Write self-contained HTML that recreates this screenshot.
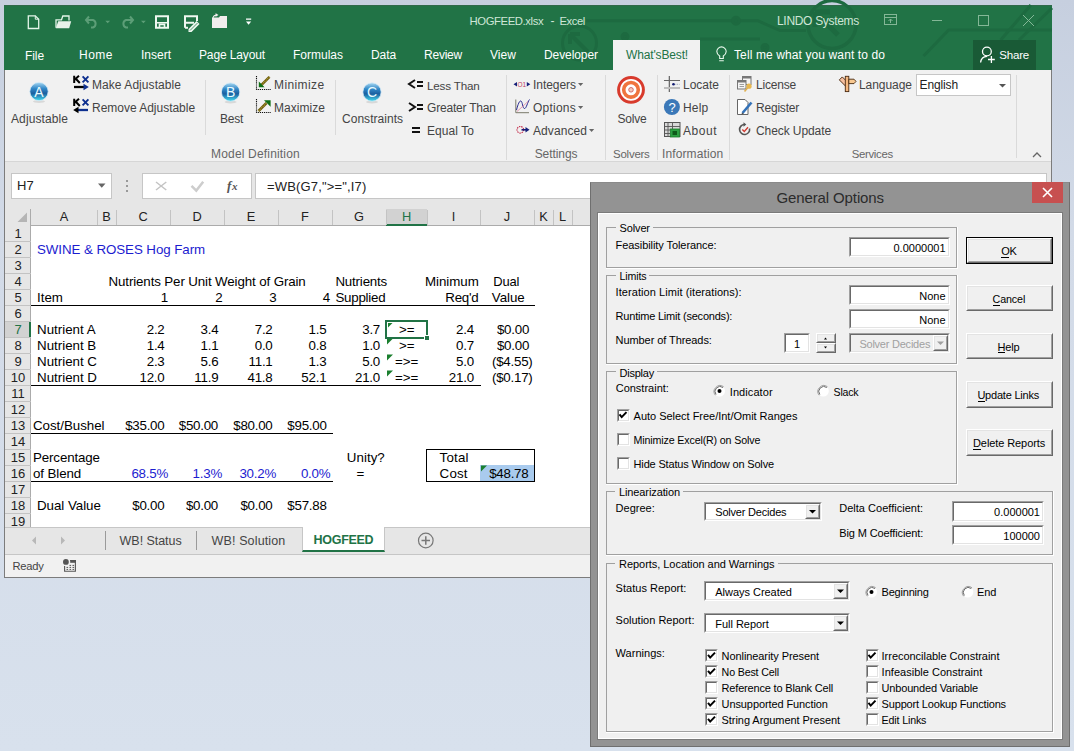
<!DOCTYPE html>
<html><head><meta charset="utf-8">
<style>
*{box-sizing:border-box;margin:0;padding:0}
html,body{width:1074px;height:751px;overflow:hidden}
body{position:relative;background:linear-gradient(#c6cfdf,#d2dae7 30%,#d8e1ed);font-family:"Liberation Sans",sans-serif;color:#000}
.a{position:absolute;white-space:nowrap}
.r{position:absolute}
svg{position:absolute;overflow:visible}
</style></head><body>
<div class="r" style="left:4px;top:5px;width:1048px;height:573px;background:#e6e6e6;border:1px solid #7c7c7c;border-top:0"></div>
<div class="r" style="left:4px;top:5px;width:1048px;height:65px;background:#217346;border-top:1px solid #30694a"></div>
<svg style="left:0;top:0" width="1074" height="80"><g stroke="#1d6a40" stroke-width="3" fill="none">
<path d="M586 20.8 H758 L780 30.6 H806"/>
<circle cx="736" cy="20.8" r="3.5" fill="#1d6a40"/>
<path d="M700 39 H760"/><circle cx="765" cy="47.5" r="3" fill="#1d6a40"/>
<circle cx="832" cy="24.6" r="24" stroke-width="3.5"/>
<path d="M815 12 L838 35 M815 12 H830 M815 12 V27" stroke-width="5"/>
<circle cx="579.5" cy="43" r="17" stroke-width="3"/>
<path d="M570 34 L588 52 M570 34 H580 M570 34 V44" stroke-width="4"/>
<circle cx="625" cy="36.6" r="3" fill="#1d6a40"/>
<path d="M923.6 56 L948.7 30 H1052"/>
<path d="M1000.7 40 L1030.8 5 M1019 40 L1052 8"/>
</g></svg>
<svg style="left:0;top:0" width="300" height="40">
<g fill="none" stroke="#e4f5e9" stroke-width="1.3">
<path d="M28.3 15.8 H35.3 L38.7 19.2 V28.5 H28.3 Z"/><path d="M35.3 15.8 V19.2 H38.7" stroke-width="1"/>
<path d="M56 27.8 V19.8 H61.5 L62.8 16 H69 V20.5"/>
</g>
<path d="M55.8 28.2 L58.2 21.2 H71.2 L69.2 28.2 Z" fill="#e8f2ea"/>
<g fill="none" stroke="#5c9e77" stroke-width="2">
<path d="M89 16.5 L86 20 L89 23.5 M86.5 20 H93 a4 4 0 0 1 0 7.5 H91"/>
<path d="M130 16.5 L133 20 L130 23.5 M132.5 20 H126 a4 4 0 0 0 0 7.5 H128"/>
</g>
<g fill="#5c9e77"><path d="M105.3 20.8 h4.8 l-2.4 2.4 z M141 20.8 h4.8 l-2.4 2.4 z"/></g>
<g fill="none" stroke="#eef8f0" stroke-width="2">
<path d="M156 16.3 H168 V27.7 H156 Z"/><path d="M156 22.8 H168 M159.5 28 V24.5 H164.5 V28" stroke-width="1.6"/>
<path d="M185 27.7 V16.3 H197 V21 M185 22.8 H194 M185 27.7 H188"/>
</g>
<path d="M188.5 29 L196.5 21 L199.5 24 L191.5 32 H188.5 Z" fill="#eef8f0"/><path d="M190 30.5 L197.5 23" stroke="#217346" stroke-width="0.8"/>
<g fill="#f1eded"><path d="M212 28 V17.5 H219 L220 16 H227 V28 Z"/></g>
<path d="M213 18 Q213.5 15 217 15 M215.5 13.8 L217.5 15 L215.5 16.4" stroke="#f1eded" stroke-width="1.1" fill="none"/>
<g fill="#fff"><path d="M246 18.6 H251.2 V19.8 H246 Z M246 21.5 H251.2 L248.6 24.8 Z"/></g>
</svg>
<svg style="left:0;top:0" width="1074" height="40"><g fill="none" stroke="#84b797" stroke-width="1">
<rect x="884.5" y="14.5" width="12" height="10"/><path d="M884.5 17.5 H896.5 M890.5 23 V19 M888.5 21 L890.5 19 L892.5 21"/>
<path d="M932 20.5 H942"/>
<rect x="978.5" y="15.5" width="10" height="10"/>
<path d="M1023 15 L1034 26 M1034 15 L1023 26"/>
</g></svg>
<div class="r" style="left:613px;top:40px;width:87px;height:31px;background:#f1f1f1"></div>
<svg style="left:0;top:0" width="1074" height="80"><g fill="none" stroke="#fff" stroke-width="1.2">
<path d="M719.7 58.5 V56 C717.5 54.6 716.8 53 716.8 51.6 A4.7 4.7 0 0 1 726.2 51.6 C726.2 53 725.5 54.6 723.3 56 V58.5 Z M719.2 60.8 H723.8" stroke="#e8f8ec" stroke-width="1.1"/>
</g></svg>
<div class="r" style="left:973px;top:40px;width:63px;height:30px;background:#195a36"></div>
<svg style="left:0;top:0" width="1074" height="80"><g fill="none" stroke="#fff" stroke-width="1.4">
<circle cx="986.9" cy="51.5" r="4.4" stroke-width="1.3"/><path d="M980.6 62.5 C981 59 983.5 56.6 987 56.4 M991.4 56 V63 M988 59.5 H994.8" stroke-width="1.3"/>
</g></svg>
<div class="r" style="left:5px;top:70px;width:1046px;height:92px;background:#f1f1f1;border-bottom:1px solid #d6d6d6"></div>
<div class="r" style="left:205px;top:80px;width:1px;height:55px;background:#dadada"></div>
<div class="r" style="left:335px;top:80px;width:1px;height:55px;background:#dadada"></div>
<div class="r" style="left:506px;top:75px;width:1px;height:85px;background:#dadada"></div>
<div class="r" style="left:605px;top:75px;width:1px;height:85px;background:#dadada"></div>
<div class="r" style="left:657px;top:75px;width:1px;height:85px;background:#dadada"></div>
<div class="r" style="left:729px;top:75px;width:1px;height:85px;background:#dadada"></div>
<div class="r" style="left:1016px;top:75px;width:1px;height:83px;background:#dadada"></div>
<svg style="left:0;top:0" width="1074" height="200"><defs><linearGradient id="sgA" x1="0" y1="0" x2="0" y2="1"><stop offset="0" stop-color="#a8d8f2"/><stop offset="0.35" stop-color="#2f86c6"/><stop offset="0.6" stop-color="#1b5f9f"/><stop offset="1" stop-color="#45dcef"/></linearGradient></defs>
<ellipse cx="39" cy="101.5" rx="6" ry="1.5" fill="#000" opacity="0.10"/>
<circle cx="39" cy="91.5" r="9.2" fill="url(#sgA)" stroke="#d9ecf8" stroke-width="0.8"/>
<text x="39" y="96.5" font-family="Liberation Sans" font-size="14" fill="#e8fbff" text-anchor="middle">A</text></svg>
<svg style="left:0;top:0" width="1074" height="200"><defs><linearGradient id="sgB" x1="0" y1="0" x2="0" y2="1"><stop offset="0" stop-color="#a8d8f2"/><stop offset="0.35" stop-color="#2f86c6"/><stop offset="0.6" stop-color="#1b5f9f"/><stop offset="1" stop-color="#45dcef"/></linearGradient></defs>
<ellipse cx="230.6" cy="102" rx="6" ry="1.5" fill="#000" opacity="0.10"/>
<circle cx="230.6" cy="92" r="9.2" fill="url(#sgB)" stroke="#d9ecf8" stroke-width="0.8"/>
<text x="230.6" y="97" font-family="Liberation Sans" font-size="14" fill="#e8fbff" text-anchor="middle">B</text></svg>
<svg style="left:0;top:0" width="1074" height="200"><defs><linearGradient id="sgC" x1="0" y1="0" x2="0" y2="1"><stop offset="0" stop-color="#a8d8f2"/><stop offset="0.35" stop-color="#2f86c6"/><stop offset="0.6" stop-color="#1b5f9f"/><stop offset="1" stop-color="#45dcef"/></linearGradient></defs>
<ellipse cx="372" cy="102" rx="6" ry="1.5" fill="#000" opacity="0.10"/>
<circle cx="372" cy="92" r="9.2" fill="url(#sgC)" stroke="#d9ecf8" stroke-width="0.8"/>
<text x="372" y="97" font-family="Liberation Sans" font-size="14" fill="#e8fbff" text-anchor="middle">C</text></svg>
<svg style="left:0;top:0" width="1074" height="200">
<g id="kx"><path d="M74.2 75.8 V83 M74.2 80 L79 75.8 M75.8 78.8 L79.8 83" stroke="#000" stroke-width="2" fill="none"/>
<path d="M82.6 76.3 L88.4 82.4 M88.4 76.3 L82.6 82.4" stroke="#0d2f8f" stroke-width="1.9" fill="none"/></g>
<path d="M74 87 H85" stroke="#000" stroke-width="2.3"/><path d="M83.5 83.8 L88.8 87 L83.5 90.2 Z" fill="#0d2f8f"/>
<use href="#kx" y="23"/>
<path d="M77 110 H88" stroke="#0d2f8f" stroke-width="2.3"/><path d="M78.5 106.8 L73.2 110 L78.5 113.2 Z" fill="#000"/>
</svg>
<svg style="left:0;top:0" width="1074" height="200"><g>
<path d="M256.5 76 V89.5 H271" stroke="#111" stroke-width="1.1" stroke-dasharray="1.2 0.9" fill="none"/>
<path d="M269.5 76.8 L261 85.3" stroke="#6b5d10" stroke-width="2.6"/><path d="M269.5 76.8 L261 85.3" stroke="#b7a030" stroke-width="1.2" stroke-dasharray="1 1"/>
<path d="M258.8 81.5 V87.3 H264.6 Z" fill="#0f6e14"/>
<path d="M256.5 99 V112.5 H271" stroke="#111" stroke-width="1.1" stroke-dasharray="1.2 0.9" fill="none"/>
<path d="M258.5 111 L266.5 103" stroke="#6b5d10" stroke-width="2.6"/><path d="M258.5 111 L266.5 103" stroke="#b7a030" stroke-width="1.2" stroke-dasharray="1 1"/>
<path d="M264 100.2 H270.6 V106.8 Z" fill="#0f6e14"/>
</g></svg>
<svg style="left:0;top:0" width="1074" height="200"><g stroke="#111" stroke-width="2" fill="none">
<path d="M415 80 L409 84 L415 88"/><path d="M417 82 H423 M417 86 H423"/>
<path d="M409 103 L415 107 L409 111"/><path d="M417 105 H423 M417 109 H423"/>
<path d="M412 128 H420 M412 132 H420"/>
</g></svg>
<svg style="left:0;top:0" width="1074" height="200">
<path d="M513.5 84.3 L517 82 V86.6 Z M530.3 84.3 L526.8 82 V86.6 Z" fill="#16207a"/>
<text x="517.5" y="86.8" font-family="Liberation Sans" font-size="6.5" fill="#c04060">O1</text>
<path d="M515.8 99.5 V112.7 H529" stroke="#7a7a6a" stroke-width="1" fill="none"/>
<path d="M516.5 110 C518 104 519.5 100.5 521 101 C522.5 101.5 522.5 108.5 524.5 108.5 C526.5 108.5 527.5 102 529.5 99.5" stroke="#2a2a90" stroke-width="1" fill="none"/>
<path d="M517 111.5 L528 101.5" stroke="#e080a0" stroke-width="0.8"/>
<circle cx="520.3" cy="129.8" r="3.3" stroke="#c02040" stroke-width="1.1" stroke-dasharray="1.4 0.9" fill="none"/>
<path d="M521.5 129.8 H526" stroke="#16207a" stroke-width="1.6"/><path d="M525.5 127 L529.5 129.8 L525.5 132.6 Z" fill="#16207a"/>
<path d="M578 83 h5.2 l-2.6 2.9 z M578 106 h5.2 l-2.6 2.9 z M589 129 h5.2 l-2.6 2.9 z" fill="#666"/>
</svg>
<svg style="left:0;top:0" width="1074" height="200">
<circle cx="631" cy="89.8" r="12.4" fill="#fff" stroke="#d83a2c" stroke-width="3"/>
<circle cx="631" cy="89.8" r="7.3" fill="#fff" stroke="#f0743e" stroke-width="3.6"/>
<circle cx="631" cy="89.8" r="2.3" fill="#f6c8b8" stroke="#c85050" stroke-width="0.8"/>
</svg>
<svg style="left:0;top:0" width="1074" height="200">
<path d="M669.3 76 V92" stroke="#555" stroke-width="1.1"/>
<path d="M664 80.5 H680" stroke="#666" stroke-width="1"/><path d="M664 88 H680" stroke="#bdbdbd" stroke-width="2"/>
<circle cx="673.5" cy="84.3" r="1.3" fill="#101a70"/><path d="M675.5 84.3 H679.5" stroke="#7080a0" stroke-width="0.8" stroke-dasharray="0.8 0.9"/>
<circle cx="671.9" cy="107" r="8" fill="#3b78b8"/>
<text x="672" y="111.6" font-family="Liberation Sans" font-size="13" fill="#fff" text-anchor="middle">?</text>
<rect x="664.5" y="122.5" width="15.5" height="14" fill="#d8d8d8" stroke="#555" stroke-width="1"/>
<path d="M664.5 126.5 H680 M664.5 130 H670 M664.5 133.5 H670 M668 122.5 V136.5 M672.5 122.5 V129" stroke="#555" stroke-width="0.9"/>
<rect x="670.3" y="129" width="9.2" height="8" fill="#2aa040" stroke="#1a7a28" stroke-width="0.8"/><rect x="672.5" y="131" width="4.5" height="4" fill="#0c5a18"/>
</svg>
<svg style="left:0;top:0" width="1074" height="200">
<rect x="742.5" y="76.5" width="8.5" height="8" fill="#f4f4f4" stroke="#777" stroke-width="1"/><rect x="742.5" y="76.5" width="8.5" height="2" fill="#777"/>
<rect x="737.5" y="80.5" width="8.5" height="8.5" fill="#f4f4f4" stroke="#777" stroke-width="1"/><rect x="737.5" y="80.5" width="8.5" height="2" fill="#777"/>
<path d="M739.5 84.5 H744 M739.5 86.5 H744" stroke="#888" stroke-width="0.8"/>
<circle cx="749" cy="86.2" r="2.6" fill="#e8b850"/><path d="M747.5 88 L744.5 91.5" stroke="#e0b050" stroke-width="1.6"/>
<path d="M737.5 99.5 H745 L748 102.5 V114.5 H737.5 Z" fill="#fff" stroke="#666" stroke-width="1"/>
<path d="M742.5 113 L751.5 102.5" stroke="#3472b8" stroke-width="2.6"/><path d="M741 115 L742.3 112.5 L743.8 113.8 Z" fill="#555"/>
<path d="M749.5 128.5 A5 5 0 1 1 744.5 124.5" stroke="#555" stroke-width="1.6" fill="none"/><path d="M743.5 122.3 L746.3 124.5 L743.5 126.8 Z" fill="#555"/>
<path d="M742.3 129.5 L744.3 131.5 L748 127.3" stroke="#d03a30" stroke-width="1.3" fill="none"/>
<rect x="839.5" y="79.5" width="9" height="4.2" transform="rotate(45 844 81.6)" fill="#f6c0a0" stroke="#4a2a10" stroke-width="0.9"/>
<rect x="845.3" y="76.3" width="3.5" height="15.3" fill="#f4b880" stroke="#4a2a10" stroke-width="0.9"/>
<path d="M848.8 79.2 H854 L856 81.4 L854 83.6 H848.8 Z" fill="#f8c890" stroke="#4a2a10" stroke-width="0.9"/>
</svg>
<div class="r" style="left:916px;top:74px;width:95px;height:22px;background:#fff;border:1px solid #c6c6c6"></div>
<svg style="left:0;top:0" width="1074" height="200"><path d="M999 84 h7 l-3.5 3.5 z" fill="#555"/><path d="M1033 157 L1037 153 L1041 157" stroke="#666" stroke-width="1.3" fill="none"/></svg>
<div class="r" style="left:11px;top:173px;width:101px;height:26px;background:#fff;border:1px solid #c6c6c6"></div>
<svg style="left:0;top:0" width="300" height="230"><path d="M98 183.5 h7.5 l-3.75 4.2 z" fill="#666"/><g fill="#999"><rect x="126" y="180" width="2" height="2"/><rect x="126" y="185" width="2" height="2"/><rect x="126" y="190" width="2" height="2"/></g></svg>
<div class="r" style="left:142px;top:173px;width:110px;height:26px;background:#fff;border:1px solid #c6c6c6"></div>
<svg style="left:0;top:0" width="300" height="230"><path d="M156 182 L166.3 190 M166.3 182 L156 190" stroke="#c4c4c4" stroke-width="1.5" fill="none"/><path d="M191.5 185.8 L196.3 190.6 L203.2 181.8" stroke="#cdcdcd" stroke-width="2.5" fill="none"/><text x="227" y="190" font-family="Liberation Serif" font-style="italic" font-weight="700" font-size="13" fill="#555">f</text><text x="232" y="190" font-family="Liberation Serif" font-style="italic" font-weight="700" font-size="11" fill="#555">x</text></svg>
<div class="r" style="left:255px;top:173px;width:792px;height:26px;background:#fff;border:1px solid #c6c6c6"></div>
<div class="r" style="left:5px;top:209px;width:600px;height:318px;background:#fff"></div>
<div class="r" style="left:5px;top:209px;width:600px;height:17px;background:#e6e6e6;border-bottom:1px solid #ababab"></div>
<div class="r" style="left:5px;top:209px;width:26px;height:318px;background:#e6e6e6;border-right:1px solid #ababab"></div>
<div class="r" style="left:386px;top:209px;width:41px;height:17px;background:#d2d2d2;border-bottom:2px solid #217346"></div>
<div class="r" style="left:5px;top:322px;width:26px;height:16px;background:#d2d2d2;border-right:2px solid #217346"></div>
<div class="r" style="left:97px;top:210px;width:1px;height:15px;background:#c3c3c3"></div>
<div class="r" style="left:116px;top:210px;width:1px;height:15px;background:#c3c3c3"></div>
<div class="r" style="left:170px;top:210px;width:1px;height:15px;background:#c3c3c3"></div>
<div class="r" style="left:224px;top:210px;width:1px;height:15px;background:#c3c3c3"></div>
<div class="r" style="left:278px;top:210px;width:1px;height:15px;background:#c3c3c3"></div>
<div class="r" style="left:332px;top:210px;width:1px;height:15px;background:#c3c3c3"></div>
<div class="r" style="left:386px;top:210px;width:1px;height:15px;background:#c3c3c3"></div>
<div class="r" style="left:427px;top:210px;width:1px;height:15px;background:#c3c3c3"></div>
<div class="r" style="left:480px;top:210px;width:1px;height:15px;background:#c3c3c3"></div>
<div class="r" style="left:534px;top:210px;width:1px;height:15px;background:#c3c3c3"></div>
<div class="r" style="left:553px;top:210px;width:1px;height:15px;background:#c3c3c3"></div>
<div class="r" style="left:572px;top:210px;width:1px;height:15px;background:#c3c3c3"></div>
<svg style="left:0;top:0" width="40" height="240"><path d="M27 212.5 V222 H17.5 Z" fill="#b5b5b5"/></svg>
<div class="r" style="left:5px;top:241px;width:26px;height:1px;background:#c3c3c3"></div>
<div class="r" style="left:5px;top:257px;width:26px;height:1px;background:#c3c3c3"></div>
<div class="r" style="left:5px;top:273px;width:26px;height:1px;background:#c3c3c3"></div>
<div class="r" style="left:5px;top:289px;width:26px;height:1px;background:#c3c3c3"></div>
<div class="r" style="left:5px;top:305px;width:26px;height:1px;background:#c3c3c3"></div>
<div class="r" style="left:5px;top:321px;width:26px;height:1px;background:#c3c3c3"></div>
<div class="r" style="left:5px;top:337px;width:26px;height:1px;background:#c3c3c3"></div>
<div class="r" style="left:5px;top:353px;width:26px;height:1px;background:#c3c3c3"></div>
<div class="r" style="left:5px;top:369px;width:26px;height:1px;background:#c3c3c3"></div>
<div class="r" style="left:5px;top:385px;width:26px;height:1px;background:#c3c3c3"></div>
<div class="r" style="left:5px;top:401px;width:26px;height:1px;background:#c3c3c3"></div>
<div class="r" style="left:5px;top:417px;width:26px;height:1px;background:#c3c3c3"></div>
<div class="r" style="left:5px;top:433px;width:26px;height:1px;background:#c3c3c3"></div>
<div class="r" style="left:5px;top:449px;width:26px;height:1px;background:#c3c3c3"></div>
<div class="r" style="left:5px;top:465px;width:26px;height:1px;background:#c3c3c3"></div>
<div class="r" style="left:5px;top:481px;width:26px;height:1px;background:#c3c3c3"></div>
<div class="r" style="left:5px;top:497px;width:26px;height:1px;background:#c3c3c3"></div>
<div class="r" style="left:5px;top:513px;width:26px;height:1px;background:#c3c3c3"></div>
<div class="r" style="left:5px;top:529px;width:26px;height:1px;background:#c3c3c3"></div>
<div class="r" style="left:31px;top:305px;width:504px;height:1px;background:#000"></div>
<div class="r" style="left:31px;top:385px;width:450px;height:1px;background:#000"></div>
<div class="r" style="left:31px;top:433px;width:302px;height:1px;background:#000"></div>
<div class="r" style="left:31px;top:481px;width:302px;height:1px;background:#000"></div>
<div class="r" style="left:480px;top:465px;width:55px;height:17px;background:#a9cbee"></div>
<div class="r" style="left:426px;top:449px;width:109px;height:33px;border:1px solid #000"></div>
<svg style="left:0;top:0" width="600" height="500"><path d="M388 323 h4.5 L388 327.5 Z" fill="#1a7f2e"/><path d="M387 338.5 h6 L387 344.5 Z" fill="#1a7f2e"/><path d="M387 354.5 h6 L387 360.5 Z" fill="#1a7f2e"/><path d="M387 370.5 h6 L387 376.5 Z" fill="#1a7f2e"/><path d="M481 465.5 h6 L481 471.5 Z" fill="#1a7f2e"/></svg>
<div class="r" style="left:385px;top:320px;width:43px;height:19px;border:2px solid #217346"></div>
<div class="r" style="left:423.5px;top:334.5px;width:6px;height:6px;background:#217346;border:1px solid #fff"></div>
<div class="r" style="left:5px;top:527px;width:600px;height:28px;background:#e6e6e6;border-top:1px solid #c6c6c6;border-bottom:1px solid #c6c6c6"></div>
<svg style="left:0;top:0" width="600" height="580"><path d="M36 536.5 V544.5 L32 540.5 Z M61 536.5 V544.5 L65 540.5 Z" fill="#b8b8b8"/><path d="M105.5 531 V550 M196.5 531 V550" stroke="#9a9a9a" stroke-width="1"/><circle cx="425.8" cy="540.5" r="7.3" fill="none" stroke="#777" stroke-width="1.2"/><path d="M421.5 540.5 H430 M425.8 536.3 V544.7" stroke="#777" stroke-width="1.5"/></svg>
<div class="r" style="left:302px;top:527px;width:83px;height:25px;background:#fff;border-bottom:2px solid #217346;border-left:1px solid #c6c6c6;border-right:1px solid #c6c6c6"></div>
<div class="r" style="left:5px;top:555px;width:1046px;height:22px;background:#f1f1f1"></div>
<svg style="left:0;top:0" width="600" height="580"><path d="M64.6 566 V571.3 H75.4 V560.5 H70.2" stroke="#555" stroke-width="1.1" fill="none"/><rect x="70.2" y="560" width="5.7" height="2.8" fill="#555"/><circle cx="65.9" cy="561.9" r="2.9" fill="#555"/><g fill="#555"><rect x="69.5" y="564.9" width="1.6" height="1"/><rect x="72.5" y="564.9" width="1.6" height="1"/><rect x="66.5" y="566.9" width="1.6" height="1"/><rect x="69.5" y="566.9" width="1.6" height="1"/><rect x="72.5" y="566.9" width="1.6" height="1"/><rect x="66.5" y="568.9" width="1.6" height="1"/><rect x="69.5" y="568.9" width="1.6" height="1"/><rect x="72.5" y="568.9" width="1.6" height="1"/></g></svg>
<div class="r" style="left:590px;top:182px;width:480px;height:565px;background:#939393;border:1px solid #6f6f6f;border-top-color:#8a8a8a"></div>
<div class="r" style="left:597px;top:212px;width:466px;height:528px;background:#f0f0f0;border:1px solid #7a7a7a;box-shadow:inset 1px 1px 0 #fff, inset -1px -1px 0 #fff"></div>
<div class="r" style="left:1032px;top:182px;width:31px;height:21px;background:#c75050"></div>
<svg style="left:0;top:0" width="1074" height="220"><path d="M1043 188 L1052 197 M1052 188 L1043 197" stroke="#fff" stroke-width="1.6"/></svg>
<div class="r" style="left:606px;top:227px;width:352px;height:42px;border:1px solid #fff;"></div>
<div class="r" style="left:606px;top:227px;width:351px;height:41px;border:1px solid #a0a0a0;"></div>
<div class="r" style="left:615.6px;top:224px;width:37.39999999999998px;height:7px;background:#f0f0f0"></div>
<div class="r" style="left:606px;top:275px;width:352px;height:90px;border:1px solid #fff;"></div>
<div class="r" style="left:606px;top:275px;width:351px;height:89px;border:1px solid #a0a0a0;"></div>
<div class="r" style="left:615.6px;top:272px;width:33.89999999999998px;height:7px;background:#f0f0f0"></div>
<div class="r" style="left:606px;top:371px;width:352px;height:114px;border:1px solid #fff;"></div>
<div class="r" style="left:606px;top:371px;width:351px;height:113px;border:1px solid #a0a0a0;"></div>
<div class="r" style="left:615.5px;top:368px;width:41.5px;height:7px;background:#f0f0f0"></div>
<div class="r" style="left:606px;top:491px;width:448px;height:65px;border:1px solid #fff;"></div>
<div class="r" style="left:606px;top:491px;width:447px;height:64px;border:1px solid #a0a0a0;"></div>
<div class="r" style="left:615px;top:488px;width:68px;height:7px;background:#f0f0f0"></div>
<div class="r" style="left:606px;top:563px;width:448px;height:170px;border:1px solid #fff;"></div>
<div class="r" style="left:606px;top:563px;width:447px;height:169px;border:1px solid #a0a0a0;"></div>
<div class="r" style="left:615px;top:560px;width:162.60000000000002px;height:7px;background:#f0f0f0"></div>
<div class="r" style="left:849px;top:237px;width:101px;height:20px;background:#fff;border:1px solid;border-color:#a0a0a0 #fff #fff #a0a0a0"></div>
<div class="r" style="left:850px;top:238px;width:99px;height:18px;border:1px solid;border-color:#696969 #e3e3e3 #e3e3e3 #696969"></div>
<div class="r" style="left:849px;top:285px;width:101px;height:20px;background:#fff;border:1px solid;border-color:#a0a0a0 #fff #fff #a0a0a0"></div>
<div class="r" style="left:850px;top:286px;width:99px;height:18px;border:1px solid;border-color:#696969 #e3e3e3 #e3e3e3 #696969"></div>
<div class="r" style="left:849px;top:309px;width:101px;height:20px;background:#fff;border:1px solid;border-color:#a0a0a0 #fff #fff #a0a0a0"></div>
<div class="r" style="left:850px;top:310px;width:99px;height:18px;border:1px solid;border-color:#696969 #e3e3e3 #e3e3e3 #696969"></div>
<div class="r" style="left:784px;top:333px;width:26px;height:20px;background:#fff;border:1px solid;border-color:#a0a0a0 #fff #fff #a0a0a0"></div>
<div class="r" style="left:785px;top:334px;width:24px;height:18px;border:1px solid;border-color:#696969 #e3e3e3 #e3e3e3 #696969"></div>
<div class="r" style="left:816px;top:333px;width:20px;height:10px;background:#f0f0f0;border:1px solid;border-color:#fff #696969 #696969 #fff"></div>
<div class="r" style="left:817px;top:334px;width:18px;height:8px;border:1px solid;border-color:#e3e3e3 #a0a0a0 #a0a0a0 #e3e3e3"></div>
<div class="r" style="left:816px;top:343px;width:20px;height:10px;background:#f0f0f0;border:1px solid;border-color:#fff #696969 #696969 #fff"></div>
<div class="r" style="left:817px;top:344px;width:18px;height:8px;border:1px solid;border-color:#e3e3e3 #a0a0a0 #a0a0a0 #e3e3e3"></div>
<svg style="left:0;top:0" width="1074" height="751"><path d="M824 339.5 h3 l-1.5 -2 z M824 346.5 h3 l-1.5 2 z" fill="#000"/></svg>
<div class="r" style="left:849px;top:333px;width:101px;height:20px;background:#f0f0f0;border:1px solid;border-color:#a0a0a0 #fff #fff #a0a0a0"></div>
<div class="r" style="left:850px;top:334px;width:99px;height:18px;border:1px solid;border-color:#696969 #e3e3e3 #e3e3e3 #696969"></div>
<div class="r" style="left:933px;top:335px;width:15px;height:16px;background:#f0f0f0;border:1px solid;border-color:#fff #696969 #696969 #fff"></div>
<div class="r" style="left:934px;top:336px;width:13px;height:14px;border:1px solid;border-color:#e3e3e3 #a0a0a0 #a0a0a0 #e3e3e3"></div>
<svg style="left:0;top:0" width="1074" height="751"><path d="M937.0 341.5 h7 l-3.5 3.5 z" fill="#a0a0a0"/></svg>
<svg style="left:0;top:0" width="1074" height="751"><circle cx="719.5" cy="391" r="5.5" fill="#fff"/><path d="M723.7 386.8 A6 6 0 0 0 715.3 395.2" stroke="#a0a0a0" stroke-width="1" fill="none"/><path d="M723.0 387.5 A5 5 0 0 0 716.0 394.5" stroke="#696969" stroke-width="1" fill="none"/><circle cx="719.5" cy="391" r="2" fill="#000"/></svg>
<svg style="left:0;top:0" width="1074" height="751"><circle cx="823.3" cy="391" r="5.5" fill="#fff"/><path d="M827.5 386.8 A6 6 0 0 0 819.0999999999999 395.2" stroke="#a0a0a0" stroke-width="1" fill="none"/><path d="M826.8 387.5 A5 5 0 0 0 819.8 394.5" stroke="#696969" stroke-width="1" fill="none"/></svg>
<div class="r" style="left:616.5px;top:408.5px;width:13.0px;height:13.0px;background:#fff;border:1px solid;border-color:#a0a0a0 #fff #fff #a0a0a0"></div>
<div class="r" style="left:617.5px;top:409.5px;width:11.0px;height:11.0px;border:1px solid;border-color:#696969 #e3e3e3 #e3e3e3 #696969"></div>
<svg style="left:0;top:0" width="1074" height="751"><path d="M619.5 414.3 L621.7 417.1 L626.5 412.1" stroke="#000" stroke-width="2" fill="none"/></svg>
<div class="r" style="left:616.5px;top:432.5px;width:13.0px;height:13.0px;background:#fff;border:1px solid;border-color:#a0a0a0 #fff #fff #a0a0a0"></div>
<div class="r" style="left:617.5px;top:433.5px;width:11.0px;height:11.0px;border:1px solid;border-color:#696969 #e3e3e3 #e3e3e3 #696969"></div>
<div class="r" style="left:616.5px;top:456.5px;width:13.0px;height:13.0px;background:#fff;border:1px solid;border-color:#a0a0a0 #fff #fff #a0a0a0"></div>
<div class="r" style="left:617.5px;top:457.5px;width:11.0px;height:11.0px;border:1px solid;border-color:#696969 #e3e3e3 #e3e3e3 #696969"></div>
<div class="r" style="left:704px;top:502px;width:118px;height:19px;background:#fff;border:1px solid;border-color:#a0a0a0 #fff #fff #a0a0a0"></div>
<div class="r" style="left:705px;top:503px;width:116px;height:17px;border:1px solid;border-color:#696969 #e3e3e3 #e3e3e3 #696969"></div>
<div class="r" style="left:805px;top:504px;width:15px;height:15px;background:#f0f0f0;border:1px solid;border-color:#fff #696969 #696969 #fff"></div>
<div class="r" style="left:806px;top:505px;width:13px;height:13px;border:1px solid;border-color:#e3e3e3 #a0a0a0 #a0a0a0 #e3e3e3"></div>
<svg style="left:0;top:0" width="1074" height="751"><path d="M809.0 510.0 h7 l-3.5 3.5 z" fill="#000"/></svg>
<div class="r" style="left:952px;top:501px;width:92px;height:21px;background:#fff;border:1px solid;border-color:#a0a0a0 #fff #fff #a0a0a0"></div>
<div class="r" style="left:953px;top:502px;width:90px;height:19px;border:1px solid;border-color:#696969 #e3e3e3 #e3e3e3 #696969"></div>
<div class="r" style="left:952px;top:525px;width:92px;height:20px;background:#fff;border:1px solid;border-color:#a0a0a0 #fff #fff #a0a0a0"></div>
<div class="r" style="left:953px;top:526px;width:90px;height:18px;border:1px solid;border-color:#696969 #e3e3e3 #e3e3e3 #696969"></div>
<div class="r" style="left:704px;top:581px;width:146px;height:20px;background:#fff;border:1px solid;border-color:#a0a0a0 #fff #fff #a0a0a0"></div>
<div class="r" style="left:705px;top:582px;width:144px;height:18px;border:1px solid;border-color:#696969 #e3e3e3 #e3e3e3 #696969"></div>
<div class="r" style="left:833px;top:583px;width:15px;height:16px;background:#f0f0f0;border:1px solid;border-color:#fff #696969 #696969 #fff"></div>
<div class="r" style="left:834px;top:584px;width:13px;height:14px;border:1px solid;border-color:#e3e3e3 #a0a0a0 #a0a0a0 #e3e3e3"></div>
<svg style="left:0;top:0" width="1074" height="751"><path d="M837.0 589.5 h7 l-3.5 3.5 z" fill="#000"/></svg>
<svg style="left:0;top:0" width="1074" height="751"><circle cx="871.5" cy="592" r="5.5" fill="#fff"/><path d="M875.7 587.8 A6 6 0 0 0 867.3 596.2" stroke="#a0a0a0" stroke-width="1" fill="none"/><path d="M875.0 588.5 A5 5 0 0 0 868.0 595.5" stroke="#696969" stroke-width="1" fill="none"/><circle cx="871.5" cy="592" r="2" fill="#000"/></svg>
<svg style="left:0;top:0" width="1074" height="751"><circle cx="967.8" cy="592" r="5.5" fill="#fff"/><path d="M972.0 587.8 A6 6 0 0 0 963.5999999999999 596.2" stroke="#a0a0a0" stroke-width="1" fill="none"/><path d="M971.3 588.5 A5 5 0 0 0 964.3 595.5" stroke="#696969" stroke-width="1" fill="none"/></svg>
<div class="r" style="left:704px;top:613px;width:146px;height:20px;background:#fff;border:1px solid;border-color:#a0a0a0 #fff #fff #a0a0a0"></div>
<div class="r" style="left:705px;top:614px;width:144px;height:18px;border:1px solid;border-color:#696969 #e3e3e3 #e3e3e3 #696969"></div>
<div class="r" style="left:833px;top:615px;width:15px;height:16px;background:#f0f0f0;border:1px solid;border-color:#fff #696969 #696969 #fff"></div>
<div class="r" style="left:834px;top:616px;width:13px;height:14px;border:1px solid;border-color:#e3e3e3 #a0a0a0 #a0a0a0 #e3e3e3"></div>
<svg style="left:0;top:0" width="1074" height="751"><path d="M837.0 621.5 h7 l-3.5 3.5 z" fill="#000"/></svg>
<div class="r" style="left:705px;top:649px;width:13px;height:13px;background:#fff;border:1px solid;border-color:#a0a0a0 #fff #fff #a0a0a0"></div>
<div class="r" style="left:706px;top:650px;width:11px;height:11px;border:1px solid;border-color:#696969 #e3e3e3 #e3e3e3 #696969"></div>
<svg style="left:0;top:0" width="1074" height="751"><path d="M708 654.8 L710.2 657.6 L715 652.6" stroke="#000" stroke-width="2" fill="none"/></svg>
<div class="r" style="left:865.5px;top:649px;width:13.0px;height:13px;background:#fff;border:1px solid;border-color:#a0a0a0 #fff #fff #a0a0a0"></div>
<div class="r" style="left:866.5px;top:650px;width:11.0px;height:11px;border:1px solid;border-color:#696969 #e3e3e3 #e3e3e3 #696969"></div>
<svg style="left:0;top:0" width="1074" height="751"><path d="M868.5 654.8 L870.7 657.6 L875.5 652.6" stroke="#000" stroke-width="2" fill="none"/></svg>
<div class="r" style="left:705px;top:665px;width:13px;height:13px;background:#fff;border:1px solid;border-color:#a0a0a0 #fff #fff #a0a0a0"></div>
<div class="r" style="left:706px;top:666px;width:11px;height:11px;border:1px solid;border-color:#696969 #e3e3e3 #e3e3e3 #696969"></div>
<svg style="left:0;top:0" width="1074" height="751"><path d="M708 670.8 L710.2 673.6 L715 668.6" stroke="#000" stroke-width="2" fill="none"/></svg>
<div class="r" style="left:865.5px;top:665px;width:13.0px;height:13px;background:#fff;border:1px solid;border-color:#a0a0a0 #fff #fff #a0a0a0"></div>
<div class="r" style="left:866.5px;top:666px;width:11.0px;height:11px;border:1px solid;border-color:#696969 #e3e3e3 #e3e3e3 #696969"></div>
<div class="r" style="left:705px;top:681px;width:13px;height:13px;background:#fff;border:1px solid;border-color:#a0a0a0 #fff #fff #a0a0a0"></div>
<div class="r" style="left:706px;top:682px;width:11px;height:11px;border:1px solid;border-color:#696969 #e3e3e3 #e3e3e3 #696969"></div>
<div class="r" style="left:865.5px;top:681px;width:13.0px;height:13px;background:#fff;border:1px solid;border-color:#a0a0a0 #fff #fff #a0a0a0"></div>
<div class="r" style="left:866.5px;top:682px;width:11.0px;height:11px;border:1px solid;border-color:#696969 #e3e3e3 #e3e3e3 #696969"></div>
<div class="r" style="left:705px;top:697px;width:13px;height:13px;background:#fff;border:1px solid;border-color:#a0a0a0 #fff #fff #a0a0a0"></div>
<div class="r" style="left:706px;top:698px;width:11px;height:11px;border:1px solid;border-color:#696969 #e3e3e3 #e3e3e3 #696969"></div>
<svg style="left:0;top:0" width="1074" height="751"><path d="M708 702.8 L710.2 705.6 L715 700.6" stroke="#000" stroke-width="2" fill="none"/></svg>
<div class="r" style="left:865.5px;top:697px;width:13.0px;height:13px;background:#fff;border:1px solid;border-color:#a0a0a0 #fff #fff #a0a0a0"></div>
<div class="r" style="left:866.5px;top:698px;width:11.0px;height:11px;border:1px solid;border-color:#696969 #e3e3e3 #e3e3e3 #696969"></div>
<svg style="left:0;top:0" width="1074" height="751"><path d="M868.5 702.8 L870.7 705.6 L875.5 700.6" stroke="#000" stroke-width="2" fill="none"/></svg>
<div class="r" style="left:705px;top:713px;width:13px;height:13px;background:#fff;border:1px solid;border-color:#a0a0a0 #fff #fff #a0a0a0"></div>
<div class="r" style="left:706px;top:714px;width:11px;height:11px;border:1px solid;border-color:#696969 #e3e3e3 #e3e3e3 #696969"></div>
<svg style="left:0;top:0" width="1074" height="751"><path d="M708 718.8 L710.2 721.6 L715 716.6" stroke="#000" stroke-width="2" fill="none"/></svg>
<div class="r" style="left:865.5px;top:713px;width:13.0px;height:13px;background:#fff;border:1px solid;border-color:#a0a0a0 #fff #fff #a0a0a0"></div>
<div class="r" style="left:866.5px;top:714px;width:11.0px;height:11px;border:1px solid;border-color:#696969 #e3e3e3 #e3e3e3 #696969"></div>
<div class="r" style="left:966px;top:237px;width:87px;height:27px;background:#f0f0f0;border:1px solid #000"></div>
<div class="r" style="left:967px;top:238px;width:85px;height:25px;background:#f0f0f0;border:1px solid;border-color:#fff #696969 #696969 #fff"></div>
<div class="r" style="left:968px;top:239px;width:83px;height:23px;border:1px solid;border-color:#e3e3e3 #a0a0a0 #a0a0a0 #e3e3e3"></div>
<div class="r" style="left:966px;top:285px;width:87px;height:26px;background:#f0f0f0;border:1px solid;border-color:#fff #696969 #696969 #fff"></div>
<div class="r" style="left:967px;top:286px;width:85px;height:24px;border:1px solid;border-color:#e3e3e3 #a0a0a0 #a0a0a0 #e3e3e3"></div>
<div class="r" style="left:966px;top:333px;width:87px;height:26px;background:#f0f0f0;border:1px solid;border-color:#fff #696969 #696969 #fff"></div>
<div class="r" style="left:967px;top:334px;width:85px;height:24px;border:1px solid;border-color:#e3e3e3 #a0a0a0 #a0a0a0 #e3e3e3"></div>
<div class="r" style="left:966px;top:381px;width:87px;height:27px;background:#f0f0f0;border:1px solid;border-color:#fff #696969 #696969 #fff"></div>
<div class="r" style="left:967px;top:382px;width:85px;height:25px;border:1px solid;border-color:#e3e3e3 #a0a0a0 #a0a0a0 #e3e3e3"></div>
<div class="r" style="left:966px;top:429px;width:87px;height:27px;background:#f0f0f0;border:1px solid;border-color:#fff #696969 #696969 #fff"></div>
<div class="r" style="left:967px;top:430px;width:85px;height:25px;border:1px solid;border-color:#e3e3e3 #a0a0a0 #a0a0a0 #e3e3e3"></div>
<div class="r" style="left:1001px;top:257px;width:8px;height:1px;background:#000"></div>
<div class="r" style="left:992.5px;top:305px;width:7.5px;height:1px;background:#000"></div>
<div class="r" style="left:997.5px;top:352px;width:7.5px;height:1px;background:#000"></div>
<div class="r" style="left:977.5px;top:401px;width:7.5px;height:1px;background:#000"></div>
<div class="r" style="left:973px;top:449px;width:8px;height:1px;background:#000"></div>
<div class="a" id="t0" style="left:469.5px;top:13.5px;font-size:11.31px;line-height:15px;color:#cfe6d7;letter-spacing:-0.40px;">HOGFEED.xlsx</div>
<div class="a" id="t1" style="left:550.5px;top:13.5px;font-size:12px;line-height:15px;color:#cfe6d7;">-</div>
<div class="a" id="t2" style="left:559.4px;top:13.5px;font-size:11.23px;line-height:15px;color:#cfe6d7;letter-spacing:-0.37px;">Excel</div>
<div class="a" id="t3" style="left:777.0px;top:13.5px;font-size:12px;line-height:15px;color:#cfe6d7;letter-spacing:-0.31px;">LINDO Systems</div>
<div class="a" id="t4" style="left:25.0px;top:48.5px;font-size:12px;line-height:15px;color:#fff;letter-spacing:-0.09px;">File</div>
<div class="a" id="t5" style="left:79.0px;top:47.5px;font-size:12px;line-height:15px;color:#fff;letter-spacing:0.50px;">Home</div>
<div class="a" id="t6" style="left:141.0px;top:47.5px;font-size:12px;line-height:15px;color:#fff;">Insert</div>
<div class="a" id="t7" style="left:199.0px;top:47.5px;font-size:12px;line-height:15px;color:#fff;letter-spacing:-0.13px;">Page Layout</div>
<div class="a" id="t8" style="left:293.0px;top:47.5px;font-size:12px;line-height:15px;color:#fff;">Formulas</div>
<div class="a" id="t9" style="left:371.0px;top:47.5px;font-size:12px;line-height:15px;color:#fff;letter-spacing:-0.09px;">Data</div>
<div class="a" id="t10" style="left:424.0px;top:47.5px;font-size:12px;line-height:15px;color:#fff;letter-spacing:-0.23px;">Review</div>
<div class="a" id="t11" style="left:490.0px;top:47.5px;font-size:12px;line-height:15px;color:#fff;letter-spacing:0.05px;">View</div>
<div class="a" id="t12" style="left:544.0px;top:47.5px;font-size:12px;line-height:15px;color:#fff;letter-spacing:-0.08px;">Developer</div>
<div class="a" id="t13" style="left:626.0px;top:47.5px;font-size:12px;line-height:15px;color:#217346;letter-spacing:-0.15px;">What'sBest!</div>
<div class="a" id="t14" style="left:734.0px;top:47.5px;font-size:12px;line-height:15px;color:#fff;letter-spacing:0.11px;">Tell me what you want to do</div>
<div class="a" id="t15" style="left:999.3px;top:47.5px;font-size:11.56px;line-height:15px;color:#fff;letter-spacing:-0.23px;">Share</div>
<div class="a" id="t16" style="left:11.0px;top:111.5px;font-size:12px;line-height:15px;color:#444;letter-spacing:0.10px;">Adjustable</div>
<div class="a" id="t17" style="left:220.0px;top:111.5px;font-size:12px;line-height:15px;color:#444;letter-spacing:-0.25px;">Best</div>
<div class="a" id="t18" style="left:342.0px;top:111.5px;font-size:12px;line-height:15px;color:#444;letter-spacing:0.03px;">Constraints</div>
<div class="a" id="t19" style="left:92.0px;top:77.5px;font-size:12px;line-height:15px;color:#444;letter-spacing:0.06px;">Make Adjustable</div>
<div class="a" id="t20" style="left:92.0px;top:100.5px;font-size:12px;line-height:15px;color:#444;letter-spacing:-0.02px;">Remove Adjustable</div>
<div class="a" id="t21" style="left:274.0px;top:77.5px;font-size:12px;line-height:15px;color:#444;letter-spacing:0.39px;">Minimize</div>
<div class="a" id="t22" style="left:274.0px;top:100.5px;font-size:12px;line-height:15px;color:#444;letter-spacing:0.04px;">Maximize</div>
<div class="a" id="t23" style="left:427.0px;top:77.5px;font-size:11.65px;line-height:15px;color:#444;letter-spacing:-0.18px;">Less Than</div>
<div class="a" id="t24" style="left:427.0px;top:100.5px;font-size:12px;line-height:15px;color:#444;letter-spacing:-0.20px;">Greater Than</div>
<div class="a" id="t25" style="left:427.0px;top:123.5px;font-size:12px;line-height:15px;color:#444;letter-spacing:0.06px;">Equal To</div>
<div class="a" id="t26" style="left:211.0px;top:146.5px;font-size:12px;line-height:15px;color:#666;letter-spacing:0.18px;">Model Definition</div>
<div class="a" id="t27" style="left:533.0px;top:77.5px;font-size:12px;line-height:15px;color:#444;letter-spacing:-0.04px;">Integers</div>
<div class="a" id="t28" style="left:533.0px;top:100.5px;font-size:12px;line-height:15px;color:#444;letter-spacing:0.23px;">Options</div>
<div class="a" id="t29" style="left:533.0px;top:123.5px;font-size:12px;line-height:15px;color:#444;letter-spacing:0.08px;">Advanced</div>
<div class="a" id="t30" style="left:534.7px;top:146.5px;font-size:12px;line-height:15px;color:#666;letter-spacing:-0.08px;">Settings</div>
<div class="a" id="t31" style="left:617.6px;top:111.5px;font-size:12px;line-height:15px;color:#444;letter-spacing:-0.25px;">Solve</div>
<div class="a" id="t32" style="left:613.0px;top:146.5px;font-size:11.49px;line-height:15px;color:#666;letter-spacing:-0.24px;">Solvers</div>
<div class="a" id="t33" style="left:683.0px;top:77.5px;font-size:12px;line-height:15px;color:#444;">Locate</div>
<div class="a" id="t34" style="left:683.0px;top:100.5px;font-size:12px;line-height:15px;color:#444;letter-spacing:0.18px;">Help</div>
<div class="a" id="t35" style="left:683.0px;top:123.5px;font-size:12px;line-height:15px;color:#444;letter-spacing:0.53px;">About</div>
<div class="a" id="t36" style="left:662.0px;top:146.5px;font-size:12px;line-height:15px;color:#666;letter-spacing:0.12px;">Information</div>
<div class="a" id="t37" style="left:756.0px;top:77.5px;font-size:12px;line-height:15px;color:#444;letter-spacing:-0.20px;">License</div>
<div class="a" id="t38" style="left:756.0px;top:100.5px;font-size:12px;line-height:15px;color:#444;letter-spacing:-0.21px;">Register</div>
<div class="a" id="t39" style="left:756.0px;top:123.5px;font-size:12px;line-height:15px;color:#444;letter-spacing:-0.09px;">Check Update</div>
<div class="a" id="t40" style="left:859.0px;top:77.5px;font-size:12px;line-height:15px;color:#444;letter-spacing:-0.05px;">Language</div>
<div class="a" id="t41" style="left:919.6px;top:77.5px;font-size:12px;line-height:15px;color:#222;letter-spacing:-0.14px;">English</div>
<div class="a" id="t42" style="left:851.7px;top:146.5px;font-size:11.36px;line-height:15px;color:#666;letter-spacing:-0.31px;">Services</div>
<div class="a" id="t43" style="left:17.0px;top:178.4px;font-size:13px;line-height:16px;color:#222;letter-spacing:0.23px;">H7</div>
<div class="a" id="t44" style="left:267.0px;top:178.8px;font-size:13px;line-height:16px;color:#222;letter-spacing:0.16px;">=WB(G7,"&gt;=",I7)</div>
<div class="a" id="t45" style="left:-236.0px;width:600px;text-align:center;top:209.3px;font-size:12.8px;line-height:16px;color:#222;">A</div>
<div class="a" id="t46" style="left:-193.5px;width:600px;text-align:center;top:209.3px;font-size:12.8px;line-height:16px;color:#222;">B</div>
<div class="a" id="t47" style="left:-157.0px;width:600px;text-align:center;top:209.3px;font-size:12.8px;line-height:16px;color:#222;">C</div>
<div class="a" id="t48" style="left:-103.0px;width:600px;text-align:center;top:209.3px;font-size:12.8px;line-height:16px;color:#222;">D</div>
<div class="a" id="t49" style="left:-49.0px;width:600px;text-align:center;top:209.3px;font-size:12.8px;line-height:16px;color:#222;">E</div>
<div class="a" id="t50" style="left:5.0px;width:600px;text-align:center;top:209.3px;font-size:12.8px;line-height:16px;color:#222;">F</div>
<div class="a" id="t51" style="left:59.0px;width:600px;text-align:center;top:209.3px;font-size:12.8px;line-height:16px;color:#222;">G</div>
<div class="a" id="t52" style="left:106.5px;width:600px;text-align:center;top:209.3px;font-size:12.8px;line-height:16px;color:#217346;">H</div>
<div class="a" id="t53" style="left:153.5px;width:600px;text-align:center;top:209.3px;font-size:12.8px;line-height:16px;color:#222;">I</div>
<div class="a" id="t54" style="left:207.0px;width:600px;text-align:center;top:209.3px;font-size:12.8px;line-height:16px;color:#222;">J</div>
<div class="a" id="t55" style="left:243.5px;width:600px;text-align:center;top:209.3px;font-size:12.8px;line-height:16px;color:#222;">K</div>
<div class="a" id="t56" style="left:262.5px;width:600px;text-align:center;top:209.3px;font-size:12.8px;line-height:16px;color:#222;">L</div>
<div class="a" id="t57" style="left:-282.0px;width:600px;text-align:center;top:225.6px;font-size:13px;line-height:16px;color:#222;">1</div>
<div class="a" id="t58" style="left:-282.0px;width:600px;text-align:center;top:241.6px;font-size:13px;line-height:16px;color:#222;">2</div>
<div class="a" id="t59" style="left:-282.0px;width:600px;text-align:center;top:257.6px;font-size:13px;line-height:16px;color:#222;">3</div>
<div class="a" id="t60" style="left:-282.0px;width:600px;text-align:center;top:273.6px;font-size:13px;line-height:16px;color:#222;">4</div>
<div class="a" id="t61" style="left:-282.0px;width:600px;text-align:center;top:289.6px;font-size:13px;line-height:16px;color:#222;">5</div>
<div class="a" id="t62" style="left:-282.0px;width:600px;text-align:center;top:305.6px;font-size:13px;line-height:16px;color:#222;">6</div>
<div class="a" id="t63" style="left:-282.0px;width:600px;text-align:center;top:321.6px;font-size:13px;line-height:16px;color:#217346;">7</div>
<div class="a" id="t64" style="left:-282.0px;width:600px;text-align:center;top:337.6px;font-size:13px;line-height:16px;color:#222;">8</div>
<div class="a" id="t65" style="left:-282.0px;width:600px;text-align:center;top:353.6px;font-size:13px;line-height:16px;color:#222;">9</div>
<div class="a" id="t66" style="left:-282.0px;width:600px;text-align:center;top:369.6px;font-size:13px;line-height:16px;color:#222;">10</div>
<div class="a" id="t67" style="left:-282.0px;width:600px;text-align:center;top:385.6px;font-size:13px;line-height:16px;color:#222;">11</div>
<div class="a" id="t68" style="left:-282.0px;width:600px;text-align:center;top:401.6px;font-size:13px;line-height:16px;color:#222;">12</div>
<div class="a" id="t69" style="left:-282.0px;width:600px;text-align:center;top:417.6px;font-size:13px;line-height:16px;color:#222;">13</div>
<div class="a" id="t70" style="left:-282.0px;width:600px;text-align:center;top:433.6px;font-size:13px;line-height:16px;color:#222;">14</div>
<div class="a" id="t71" style="left:-282.0px;width:600px;text-align:center;top:449.6px;font-size:13px;line-height:16px;color:#222;">15</div>
<div class="a" id="t72" style="left:-282.0px;width:600px;text-align:center;top:465.6px;font-size:13px;line-height:16px;color:#222;">16</div>
<div class="a" id="t73" style="left:-282.0px;width:600px;text-align:center;top:481.6px;font-size:13px;line-height:16px;color:#222;">17</div>
<div class="a" id="t74" style="left:-282.0px;width:600px;text-align:center;top:497.6px;font-size:13px;line-height:16px;color:#222;">18</div>
<div class="a" id="t75" style="left:-282.0px;width:600px;text-align:center;top:513.6px;font-size:13px;line-height:16px;color:#222;">19</div>
<div class="a" id="t76" style="left:37.0px;top:240.5px;font-size:13.33px;line-height:17px;color:#1c1cd0;letter-spacing:-0.07px;">SWINE &amp; ROSES Hog Farm</div>
<div class="a" id="t77" style="left:108.5px;top:272.5px;font-size:13.33px;line-height:17px;color:#000;letter-spacing:-0.12px;">Nutrients Per Unit Weight of Grain</div>
<div class="a" id="t78" style="left:335.4px;top:272.5px;font-size:13.33px;line-height:17px;color:#000;letter-spacing:-0.18px;">Nutrients</div>
<div class="a" id="t79" style="left:425.0px;top:272.5px;font-size:13.33px;line-height:17px;color:#000;letter-spacing:-0.04px;">Minimum</div>
<div class="a" id="t80" style="left:493.3px;top:272.5px;font-size:12.94px;line-height:17px;color:#000;letter-spacing:-0.20px;">Dual</div>
<div class="a" id="t81" style="left:37.0px;top:288.5px;font-size:13.33px;line-height:17px;color:#000;">Item</div>
<div class="a" id="t82" style="right:906.0px;top:288.5px;font-size:13.33px;line-height:17px;color:#000;letter-spacing:-0.25px;">1</div>
<div class="a" id="t83" style="right:851.5px;top:288.5px;font-size:13.33px;line-height:17px;color:#000;letter-spacing:-0.25px;">2</div>
<div class="a" id="t84" style="right:797.5px;top:288.5px;font-size:13.33px;line-height:17px;color:#000;letter-spacing:-0.25px;">3</div>
<div class="a" id="t85" style="right:744.0px;top:288.5px;font-size:13.33px;line-height:17px;color:#000;letter-spacing:-0.25px;">4</div>
<div class="a" id="t86" style="left:335.4px;top:288.5px;font-size:13.33px;line-height:17px;color:#000;letter-spacing:-0.23px;">Supplied</div>
<div class="a" id="t87" style="right:595.5px;top:288.5px;font-size:13.33px;line-height:17px;color:#000;letter-spacing:-0.25px;">Req'd</div>
<div class="a" id="t88" style="left:491.8px;top:288.5px;font-size:13.33px;line-height:17px;color:#000;letter-spacing:-0.06px;">Value</div>
<div class="a" id="t89" style="left:37.0px;top:320.5px;font-size:13.33px;line-height:17px;color:#000;">Nutrient A</div>
<div class="a" id="t90" style="right:909.5px;top:320.5px;font-size:13.33px;line-height:17px;color:#000;letter-spacing:-0.25px;">2.2</div>
<div class="a" id="t91" style="right:855.7px;top:320.5px;font-size:13.33px;line-height:17px;color:#000;letter-spacing:-0.25px;">3.4</div>
<div class="a" id="t92" style="right:801.5px;top:320.5px;font-size:13.33px;line-height:17px;color:#000;letter-spacing:-0.25px;">7.2</div>
<div class="a" id="t93" style="right:747.7px;top:320.5px;font-size:13.33px;line-height:17px;color:#000;letter-spacing:-0.25px;">1.5</div>
<div class="a" id="t94" style="right:694.0px;top:320.5px;font-size:13.33px;line-height:17px;color:#000;letter-spacing:-0.25px;">3.7</div>
<div class="a" id="t95" style="left:106.7px;width:600px;text-align:center;top:320.5px;font-size:13.33px;line-height:17px;color:#000;">&gt;=</div>
<div class="a" id="t96" style="right:600.2px;top:320.5px;font-size:13.33px;line-height:17px;color:#000;letter-spacing:-0.25px;">2.4</div>
<div class="a" id="t97" style="right:541.5px;top:320.5px;font-size:13.33px;line-height:17px;color:#000;white-space:pre;letter-spacing:-0.25px;">$0.00 </div>
<div class="a" id="t98" style="left:37.0px;top:336.5px;font-size:13.33px;line-height:17px;color:#000;">Nutrient B</div>
<div class="a" id="t99" style="right:909.5px;top:336.5px;font-size:13.33px;line-height:17px;color:#000;letter-spacing:-0.25px;">1.4</div>
<div class="a" id="t100" style="right:855.7px;top:336.5px;font-size:13.33px;line-height:17px;color:#000;letter-spacing:-0.25px;">1.1</div>
<div class="a" id="t101" style="right:801.5px;top:336.5px;font-size:13.33px;line-height:17px;color:#000;letter-spacing:-0.25px;">0.0</div>
<div class="a" id="t102" style="right:747.7px;top:336.5px;font-size:13.33px;line-height:17px;color:#000;letter-spacing:-0.25px;">0.8</div>
<div class="a" id="t103" style="right:694.0px;top:336.5px;font-size:13.33px;line-height:17px;color:#000;letter-spacing:-0.25px;">1.0</div>
<div class="a" id="t104" style="left:106.7px;width:600px;text-align:center;top:336.5px;font-size:13.33px;line-height:17px;color:#000;">&gt;=</div>
<div class="a" id="t105" style="right:600.2px;top:336.5px;font-size:13.33px;line-height:17px;color:#000;letter-spacing:-0.25px;">0.7</div>
<div class="a" id="t106" style="right:541.5px;top:336.5px;font-size:13.33px;line-height:17px;color:#000;white-space:pre;letter-spacing:-0.25px;">$0.00 </div>
<div class="a" id="t107" style="left:37.0px;top:352.5px;font-size:13.33px;line-height:17px;color:#000;">Nutrient C</div>
<div class="a" id="t108" style="right:909.5px;top:352.5px;font-size:13.33px;line-height:17px;color:#000;letter-spacing:-0.25px;">2.3</div>
<div class="a" id="t109" style="right:855.7px;top:352.5px;font-size:13.33px;line-height:17px;color:#000;letter-spacing:-0.25px;">5.6</div>
<div class="a" id="t110" style="right:801.5px;top:352.5px;font-size:13.33px;line-height:17px;color:#000;letter-spacing:-0.25px;">11.1</div>
<div class="a" id="t111" style="right:747.7px;top:352.5px;font-size:13.33px;line-height:17px;color:#000;letter-spacing:-0.25px;">1.3</div>
<div class="a" id="t112" style="right:694.0px;top:352.5px;font-size:13.33px;line-height:17px;color:#000;letter-spacing:-0.25px;">5.0</div>
<div class="a" id="t113" style="left:106.7px;width:600px;text-align:center;top:352.5px;font-size:13.33px;line-height:17px;color:#000;">=&gt;=</div>
<div class="a" id="t114" style="right:600.2px;top:352.5px;font-size:13.33px;line-height:17px;color:#000;letter-spacing:-0.25px;">5.0</div>
<div class="a" id="t115" style="right:541.5px;top:352.5px;font-size:13.33px;line-height:17px;color:#000;white-space:pre;letter-spacing:-0.25px;">($4.55)</div>
<div class="a" id="t116" style="left:37.0px;top:368.5px;font-size:13.33px;line-height:17px;color:#000;">Nutrient D</div>
<div class="a" id="t117" style="right:909.5px;top:368.5px;font-size:13.33px;line-height:17px;color:#000;letter-spacing:-0.25px;">12.0</div>
<div class="a" id="t118" style="right:855.7px;top:368.5px;font-size:13.33px;line-height:17px;color:#000;letter-spacing:-0.25px;">11.9</div>
<div class="a" id="t119" style="right:801.5px;top:368.5px;font-size:13.33px;line-height:17px;color:#000;letter-spacing:-0.25px;">41.8</div>
<div class="a" id="t120" style="right:747.7px;top:368.5px;font-size:13.33px;line-height:17px;color:#000;letter-spacing:-0.25px;">52.1</div>
<div class="a" id="t121" style="right:694.0px;top:368.5px;font-size:13.33px;line-height:17px;color:#000;letter-spacing:-0.25px;">21.0</div>
<div class="a" id="t122" style="left:106.7px;width:600px;text-align:center;top:368.5px;font-size:13.33px;line-height:17px;color:#000;">=&gt;=</div>
<div class="a" id="t123" style="right:600.2px;top:368.5px;font-size:13.33px;line-height:17px;color:#000;letter-spacing:-0.25px;">21.0</div>
<div class="a" id="t124" style="right:541.5px;top:368.5px;font-size:13.33px;line-height:17px;color:#000;white-space:pre;letter-spacing:-0.25px;">($0.17)</div>
<div class="a" id="t125" style="left:33.0px;top:416.5px;font-size:13.33px;line-height:17px;color:#000;letter-spacing:-0.03px;">Cost/Bushel</div>
<div class="a" id="t126" style="right:909.6px;top:416.5px;font-size:13.33px;line-height:17px;color:#000;letter-spacing:-0.25px;">$35.00</div>
<div class="a" id="t127" style="right:856.0px;top:416.5px;font-size:13.33px;line-height:17px;color:#000;letter-spacing:-0.25px;">$50.00</div>
<div class="a" id="t128" style="right:801.5px;top:416.5px;font-size:13.33px;line-height:17px;color:#000;letter-spacing:-0.25px;">$80.00</div>
<div class="a" id="t129" style="right:747.4px;top:416.5px;font-size:13.33px;line-height:17px;color:#000;letter-spacing:-0.25px;">$95.00</div>
<div class="a" id="t130" style="left:33.0px;top:448.5px;font-size:13.33px;line-height:17px;color:#000;letter-spacing:-0.13px;">Percentage</div>
<div class="a" id="t131" style="left:33.0px;top:464.5px;font-size:13.33px;line-height:17px;color:#000;letter-spacing:-0.10px;">of Blend</div>
<div class="a" id="t132" style="right:906.0px;top:464.5px;font-size:13.33px;line-height:17px;color:#1c1cd0;letter-spacing:-0.25px;">68.5%</div>
<div class="a" id="t133" style="right:852.0px;top:464.5px;font-size:13.33px;line-height:17px;color:#1c1cd0;letter-spacing:-0.25px;">1.3%</div>
<div class="a" id="t134" style="right:798.0px;top:464.5px;font-size:13.33px;line-height:17px;color:#1c1cd0;letter-spacing:-0.25px;">30.2%</div>
<div class="a" id="t135" style="right:743.7px;top:464.5px;font-size:13.33px;line-height:17px;color:#1c1cd0;letter-spacing:-0.25px;">0.0%</div>
<div class="a" id="t136" style="left:346.8px;top:448.5px;font-size:13.33px;line-height:17px;color:#000;letter-spacing:0.04px;">Unity?</div>
<div class="a" id="t137" style="left:60.5px;width:600px;text-align:center;top:464.5px;font-size:13.33px;line-height:17px;color:#000;">=</div>
<div class="a" id="t138" style="left:439.6px;top:448.5px;font-size:13.33px;line-height:17px;color:#000;letter-spacing:0.17px;">Total</div>
<div class="a" id="t139" style="left:439.6px;top:464.5px;font-size:13.33px;line-height:17px;color:#000;letter-spacing:0.18px;">Cost</div>
<div class="a" id="t140" style="right:545.6px;top:464.5px;font-size:13.33px;line-height:17px;color:#000;letter-spacing:-0.25px;">$48.78</div>
<div class="a" id="t141" style="left:37.0px;top:496.5px;font-size:13.33px;line-height:17px;color:#000;letter-spacing:-0.04px;">Dual Value</div>
<div class="a" id="t142" style="right:909.6px;top:496.5px;font-size:13.33px;line-height:17px;color:#000;letter-spacing:-0.25px;">$0.00</div>
<div class="a" id="t143" style="right:856.0px;top:496.5px;font-size:13.33px;line-height:17px;color:#000;letter-spacing:-0.25px;">$0.00</div>
<div class="a" id="t144" style="right:801.5px;top:496.5px;font-size:13.33px;line-height:17px;color:#000;letter-spacing:-0.25px;">$0.00</div>
<div class="a" id="t145" style="right:747.4px;top:496.5px;font-size:13.33px;line-height:17px;color:#000;letter-spacing:-0.25px;">$57.88</div>
<div class="a" id="t146" style="left:119.6px;top:532.5px;font-size:12.5px;line-height:16px;color:#444;letter-spacing:-0.05px;">WB! Status</div>
<div class="a" id="t147" style="left:211.5px;top:532.5px;font-size:12.5px;line-height:16px;color:#444;letter-spacing:0.14px;">WB! Solution</div>
<div class="a" id="t148" style="left:313.6px;top:532.0px;font-size:12.5px;line-height:16px;color:#217346;font-weight:700;letter-spacing:-0.30px;">HOGFEED</div>
<div class="a" id="t149" style="left:12.5px;top:559.3px;font-size:11.2px;line-height:14px;color:#444;letter-spacing:-0.22px;">Ready</div>
<div class="a" id="t150" style="left:776.4px;top:188.1px;font-size:15px;line-height:19px;color:#2b2b2b;letter-spacing:-0.11px;">General Options</div>
<div class="a" id="t151" style="left:619.6px;top:221.0px;font-size:11px;line-height:14px;color:#000;letter-spacing:-0.15px;">Solver</div>
<div class="a" id="t152" style="left:619.6px;top:269.4px;font-size:10.63px;line-height:14px;color:#000;letter-spacing:-0.16px;">Limits</div>
<div class="a" id="t153" style="left:619.5px;top:365.5px;font-size:11px;line-height:14px;color:#000;letter-spacing:-0.24px;">Display</div>
<div class="a" id="t154" style="left:619.0px;top:484.8px;font-size:11px;line-height:14px;color:#000;letter-spacing:-0.11px;">Linearization</div>
<div class="a" id="t155" style="left:619.0px;top:557.0px;font-size:11px;line-height:14px;color:#000;letter-spacing:-0.04px;">Reports, Location and Warnings</div>
<div class="a" id="t156" style="left:615.6px;top:237.6px;font-size:11px;line-height:14px;color:#000;letter-spacing:-0.07px;">Feasibility Tolerance:</div>
<div class="a" id="t157" style="right:128.5px;top:241.3px;font-size:11px;line-height:14px;color:#000;">0.0000001</div>
<div class="a" id="t158" style="left:615.6px;top:285.2px;font-size:11px;line-height:14px;color:#000;letter-spacing:0.07px;">Iteration Limit (iterations):</div>
<div class="a" id="t159" style="right:128.5px;top:288.8px;font-size:11px;line-height:14px;color:#000;">None</div>
<div class="a" id="t160" style="left:615.6px;top:309.1px;font-size:11px;line-height:14px;color:#000;letter-spacing:-0.21px;">Runtime Limit (seconds):</div>
<div class="a" id="t161" style="right:128.5px;top:312.8px;font-size:11px;line-height:14px;color:#000;">None</div>
<div class="a" id="t162" style="left:615.6px;top:333.0px;font-size:11px;line-height:14px;color:#000;letter-spacing:-0.08px;">Number of Threads:</div>
<div class="a" id="t163" style="left:497.0px;width:600px;text-align:center;top:337.0px;font-size:11px;line-height:14px;color:#000;">1</div>
<div class="a" id="t164" style="left:859.4px;top:337.0px;font-size:11px;line-height:14px;color:#a0a0a0;letter-spacing:-0.23px;">Solver Decides</div>
<div class="a" id="t165" style="left:615.7px;top:381.4px;font-size:11px;line-height:14px;color:#000;">Constraint:</div>
<div class="a" id="t166" style="left:729.8px;top:384.8px;font-size:11px;line-height:14px;color:#000;letter-spacing:0.07px;">Indicator</div>
<div class="a" id="t167" style="left:833.6px;top:384.8px;font-size:10.57px;line-height:14px;color:#000;letter-spacing:-0.21px;">Slack</div>
<div class="a" id="t168" style="left:633.6px;top:409.0px;font-size:11px;line-height:14px;color:#000;letter-spacing:-0.02px;">Auto Select Free/Int/Omit Ranges</div>
<div class="a" id="t169" style="left:633.6px;top:433.0px;font-size:10.68px;line-height:14px;color:#000;letter-spacing:-0.15px;">Minimize Excel(R) on Solve</div>
<div class="a" id="t170" style="left:633.6px;top:457.0px;font-size:11px;line-height:14px;color:#000;letter-spacing:-0.17px;">Hide Status Window on Solve</div>
<div class="a" id="t171" style="left:615.6px;top:501.4px;font-size:11px;line-height:14px;color:#000;">Degree:</div>
<div class="a" id="t172" style="left:715.3px;top:505.0px;font-size:11px;line-height:14px;color:#000;letter-spacing:-0.21px;">Solver Decides</div>
<div class="a" id="t173" style="left:839.2px;top:501.4px;font-size:11px;line-height:14px;color:#000;letter-spacing:0.02px;">Delta Coefficient:</div>
<div class="a" id="t174" style="right:34.0px;top:505.0px;font-size:11px;line-height:14px;color:#000;">0.000001</div>
<div class="a" id="t175" style="left:839.2px;top:525.5px;font-size:11px;line-height:14px;color:#000;letter-spacing:-0.11px;">Big M Coefficient:</div>
<div class="a" id="t176" style="right:34.0px;top:529.0px;font-size:11px;line-height:14px;color:#000;">100000</div>
<div class="a" id="t177" style="left:615.6px;top:581.0px;font-size:11px;line-height:14px;color:#000;letter-spacing:0.04px;">Status Report:</div>
<div class="a" id="t178" style="left:715.3px;top:585.0px;font-size:11px;line-height:14px;color:#000;letter-spacing:-0.03px;">Always Created</div>
<div class="a" id="t179" style="left:881.6px;top:585.0px;font-size:11px;line-height:14px;color:#000;letter-spacing:-0.22px;">Beginning</div>
<div class="a" id="t180" style="left:977.0px;top:585.0px;font-size:11px;line-height:14px;color:#000;letter-spacing:-0.09px;">End</div>
<div class="a" id="t181" style="left:615.6px;top:613.0px;font-size:11px;line-height:14px;color:#000;">Solution Report:</div>
<div class="a" id="t182" style="left:715.3px;top:617.0px;font-size:11px;line-height:14px;color:#000;letter-spacing:-0.03px;">Full Report</div>
<div class="a" id="t183" style="left:615.6px;top:645.8px;font-size:11px;line-height:14px;color:#000;letter-spacing:0.02px;">Warnings:</div>
<div class="a" id="t184" style="left:721.6px;top:648.6px;font-size:11px;line-height:14px;color:#000;letter-spacing:-0.08px;">Nonlinearity Present</div>
<div class="a" id="t185" style="left:881.6px;top:648.6px;font-size:11px;line-height:14px;color:#000;letter-spacing:-0.03px;">Irreconcilable Constraint</div>
<div class="a" id="t186" style="left:721.6px;top:664.6px;font-size:10.66px;line-height:14px;color:#000;letter-spacing:-0.16px;">No Best Cell</div>
<div class="a" id="t187" style="left:881.6px;top:664.6px;font-size:11px;line-height:14px;color:#000;letter-spacing:0.02px;">Infeasible Constraint</div>
<div class="a" id="t188" style="left:721.6px;top:680.6px;font-size:11px;line-height:14px;color:#000;letter-spacing:-0.18px;">Reference to Blank Cell</div>
<div class="a" id="t189" style="left:881.6px;top:680.6px;font-size:11px;line-height:14px;color:#000;letter-spacing:-0.18px;">Unbounded Variable</div>
<div class="a" id="t190" style="left:721.6px;top:696.6px;font-size:11px;line-height:14px;color:#000;letter-spacing:-0.10px;">Unsupported Function</div>
<div class="a" id="t191" style="left:881.6px;top:696.6px;font-size:11px;line-height:14px;color:#000;letter-spacing:-0.17px;">Support Lookup Functions</div>
<div class="a" id="t192" style="left:721.6px;top:712.6px;font-size:11px;line-height:14px;color:#000;letter-spacing:-0.06px;">String Argument Present</div>
<div class="a" id="t193" style="left:881.6px;top:712.6px;font-size:10.66px;line-height:14px;color:#000;letter-spacing:-0.15px;">Edit Links</div>
<div class="a" id="t194" style="left:1001.3px;top:244.3px;font-size:11px;line-height:14px;color:#000;letter-spacing:-0.24px;">OK</div>
<div class="a" id="t195" style="left:992.6px;top:292.4px;font-size:10.72px;line-height:14px;color:#000;letter-spacing:-0.14px;">Cancel</div>
<div class="a" id="t196" style="left:997.6px;top:339.9px;font-size:11px;line-height:14px;color:#000;letter-spacing:-0.18px;">Help</div>
<div class="a" id="t197" style="left:977.4px;top:388.3px;font-size:11px;line-height:14px;color:#000;letter-spacing:-0.21px;">Update Links</div>
<div class="a" id="t198" style="left:973.0px;top:436.3px;font-size:11px;line-height:14px;color:#000;letter-spacing:-0.09px;">Delete Reports</div>
</body></html>
